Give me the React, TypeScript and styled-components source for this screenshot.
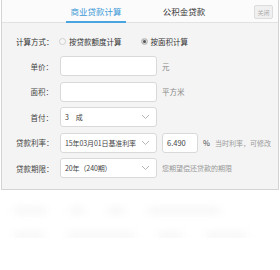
import styled, { createGlobalStyle } from "styled-components";

const GlobalStyle = createGlobalStyle`
  body {
    margin: 0;
    background: #ffffff;
    font-family: "Noto Sans CJK SC", "Liberation Sans", sans-serif;
  }
`;

type Row = {
  label: string;
  kind: "input" | "select";
  value?: string;
  after?: React.ReactNode;
};

const Chevron = () => (
  <svg width="9" height="6" viewBox="0 0 9 6" aria-hidden>
    <path d="M1 1l3.5 3.5L8 1" fill="none" stroke="#b5b5b5" strokeWidth="1" />
  </svg>
);

function App() {
  const rows: Row[] = [
    { label: "单价：", kind: "input", after: <Unit>元</Unit> },
    { label: "面积：", kind: "input", after: <Unit>平方米</Unit> },
    { label: "首付：", kind: "select", value: "3　成" },
    {
      label: "贷款利率：",
      kind: "select",
      value: "15年03月01日基准利率",
      after: (
        <>
          <RateBox>6.490</RateBox>
          <Percent>%</Percent>
          <Hint>当时利率，可修改</Hint>
        </>
      ),
    },
    {
      label: "贷款期限：",
      kind: "select",
      value: "20年（240期）",
      after: <Hint>您期望偿还贷款的期限</Hint>,
    },
  ];

  return (
    <>
      <GlobalStyle />
      <Panel>
        <Header>
          <Tab $active>商业贷款计算</Tab>
          <Tab>公积金贷款</Tab>
          <CloseButton>关闭</CloseButton>
        </Header>
        <Body>
          <MethodRow>
            <MethodLabel>计算方式：</MethodLabel>
            <Radio>
              <Dot />
              按贷款额度计算
            </Radio>
            <Radio>
              <Dot $checked />
              按面积计算
            </Radio>
          </MethodRow>
          {rows.map((row) => (
            <FormRow key={row.label}>
              <Label>{row.label}</Label>
              {row.kind === "input" ? (
                <Field />
              ) : (
                <Field>
                  <span>{row.value}</span>
                  <Chevron />
                </Field>
              )}
              {row.after}
            </FormRow>
          ))}
        </Body>
      </Panel>
      <Backdrop>
        <BlurLine>
          <Blob $w={32} />
          <Blob $w={14} />
          <Blob $w={16} />
          <Blob $w={72} />
        </BlurLine>
        <BlurLine>
          <Blob $w={30} />
          <Blob $w={66} />
          <Blob $w={24} />
          <Blob $w={40} />
        </BlurLine>
      </Backdrop>
    </>
  );
}

const Panel = styled.div`
  width: 276px;
  margin-left: 1px;
  height: 189px;
  border: 1px solid #d4d4d4;
  border-top: none;
  background: #f4f4f4;
  display: flex;
  flex-direction: column;
`;

const Header = styled.div`
  height: 22px;
  display: flex;
  align-items: stretch;
  background: #fbfbfb;
  border-bottom: 1px solid #e2e2e2;
  padding-left: 64px;
  position: relative;
`;

const Tab = styled.div<{ $active?: boolean }>`
  width: 60px;
  margin-right: 28px;
  display: flex;
  align-items: center;
  justify-content: center;
  font-size: 8.5px;
  color: ${(p) => (p.$active ? "#3d9ad8" : "#333333")};
  border-bottom: 2px solid ${(p) => (p.$active ? "#49a4e0" : "transparent")};
  margin-bottom: -1px;
`;

const CloseButton = styled.div`
  position: absolute;
  right: 5px;
  top: 5px;
  width: 17px;
  height: 12px;
  border: 1px solid #dcdcdc;
  border-radius: 2px;
  background: #f0f0f0;
  color: #aaaaaa;
  font-size: 6px;
  display: flex;
  align-items: center;
  justify-content: center;
`;

const Body = styled.div`
  padding: 9px 0 0 14px;
  display: flex;
  flex-direction: column;
  gap: 5px;
`;

const MethodRow = styled.div`
  height: 18px;
  display: flex;
  align-items: center;
  font-size: 7.5px;
  color: #333333;
  margin-bottom: 1px;
`;

const MethodLabel = styled.span`
  width: 43px;
  white-space: nowrap;
`;

const Radio = styled.span`
  display: flex;
  align-items: center;
  gap: 3px;
  margin-right: 19px;
  white-space: nowrap;
`;

const Dot = styled.span<{ $checked?: boolean }>`
  width: 5px;
  height: 5px;
  border-radius: 50%;
  border: 1px solid #cfcfcf;
  background: ${(p) => (p.$checked ? "#555555" : "#f6f6f6")};
  box-shadow: ${(p) => (p.$checked ? "inset 0 0 0 1px #dddddd" : "none")};
`;

const FormRow = styled.div`
  height: 20px;
  display: flex;
  align-items: center;
  margin-bottom: 0.6px;
`;

const Label = styled.span`
  width: 37px;
  text-align: right;
  margin-right: 7px;
  font-size: 7.5px;
  color: #444444;
  white-space: nowrap;
`;

const Field = styled.div`
  width: 85px;
  height: 18px;
  box-sizing: content-box;
  border: 1px solid #d9d9d9;
  border-radius: 3px;
  background: #ffffff;
  display: flex;
  align-items: center;
  justify-content: space-between;
  padding: 0 6px 0 4px;
  font-size: 7px;
  color: #444444;
  white-space: nowrap;
  & > span {
    overflow: hidden;
    letter-spacing: -0.1px;
  }
`;

const Unit = styled.span`
  margin-left: 5px;
  font-size: 7.5px;
  color: #888888;
`;

const RateBox = styled.div`
  width: 30px;
  height: 18px;
  border: 1px solid #d9d9d9;
  border-radius: 3px;
  background: #ffffff;
  margin-left: 5px;
  padding-left: 4px;
  display: flex;
  align-items: center;
  font-size: 7.5px;
  color: #444444;
`;

const Percent = styled.span`
  margin-left: 5px;
  font-size: 7.5px;
  color: #444444;
`;

const Hint = styled.span`
  margin-left: 5px;
  font-size: 7px;
  color: #999999;
  white-space: nowrap;
`;

const Backdrop = styled.div`
  padding: 18px 14px 0 14px;
  display: flex;
  flex-direction: column;
  gap: 20px;
  filter: blur(4px);
`;

const BlurLine = styled.div`
  display: flex;
  gap: 24px;
`;

const Blob = styled.div<{ $w: number }>`
  width: ${(p) => p.$w}px;
  height: 5px;
  background: #f2f2f2;
`;

export default App;
